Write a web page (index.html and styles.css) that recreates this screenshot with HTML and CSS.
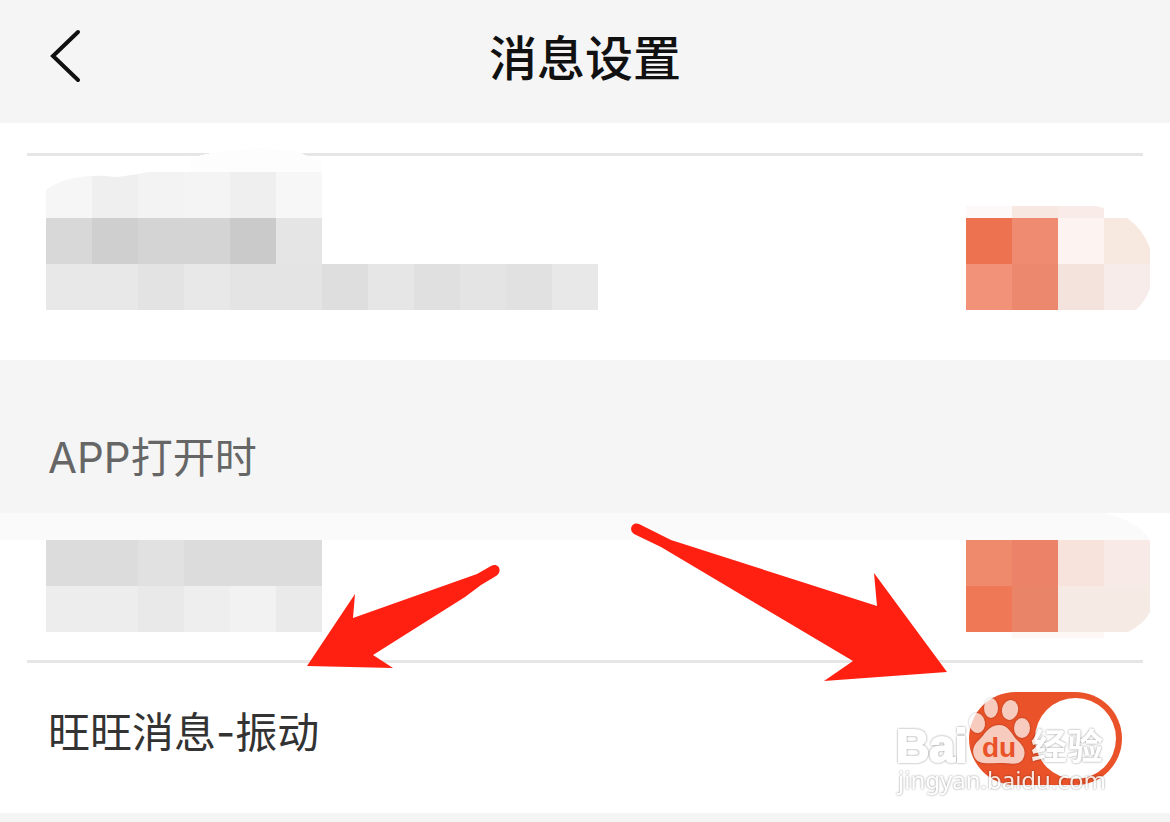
FILE: index.html
```
<!DOCTYPE html>
<html lang="zh-CN">
<head>
    <meta charset="UTF-8">
    <meta name="viewport" content="width=device-width, initial-scale=1.0">
    <title>消息设置</title>
    <link rel="stylesheet" href="styles.css">
</head>
<body>

    <header class="top-bar">
        <button type="button" class="back-button" aria-label="返回">
            <svg width="34" height="56" viewBox="0 0 34 56" fill="none" stroke="#111" stroke-width="4" stroke-linecap="round">
                <path d="M30 4L5 28L30 52"/>
            </svg>
        </button>
        <h1 class="page-title">消息设置</h1>
    </header>

    <main>
        <section class="group">
            <hr class="divider">
            <div class="row row-summary">
                <!-- Texto oculto -->
                <svg class="mosaic" width="552" height="138" viewBox="0 0 552 138" shape-rendering="crispEdges" aria-hidden="true">
                    <path fill="#fdfdfd" d="M144 0V-14C180 -25 242 -28 262 -16L276 -10V0Z"/>
                    <path fill="#f6f6f6" shape-rendering="auto" d="M0 46V18C12 9 26 5 46 4V46Z"/>
                    <path fill="#efefef" shape-rendering="auto" d="M46 46V4C58 3 66 5 72 5L92 2V46Z"/>
                    <path fill="#f3f3f3" shape-rendering="auto" d="M92 46V2L102 0H138V46Z"/>
                    <rect x="138" width="46" height="46" fill="#f4f4f4"/>
                    <rect x="184" width="46" height="46" fill="#efefef"/>
                    <rect x="230" width="46" height="46" fill="#f7f7f7"/>
                    <rect y="46" width="46" height="46" fill="#d8d8d8"/>
                    <rect x="46" y="46" width="46" height="46" fill="#cfcfcf"/>
                    <rect x="92" y="46" width="92" height="46" fill="#d4d4d4"/>
                    <rect x="184" y="46" width="46" height="46" fill="#cacaca"/>
                    <rect x="230" y="46" width="46" height="46" fill="#e5e5e5"/>
                    <rect y="92" width="92" height="46" fill="#e8e8e8"/>
                    <rect x="92" y="92" width="46" height="46" fill="#e3e3e3"/>
                    <rect x="138" y="92" width="46" height="46" fill="#e8e8e8"/>
                    <rect x="184" y="92" width="92" height="46" fill="#e4e4e4"/>
                    <rect x="276" y="92" width="46" height="46" fill="#dedede"/>
                    <rect x="322" y="92" width="46" height="46" fill="#e6e6e6"/>
                    <rect x="368" y="92" width="46" height="46" fill="#e0e0e0"/>
                    <rect x="414" y="92" width="46" height="46" fill="#e4e4e4"/>
                    <rect x="460" y="92" width="46" height="46" fill="#e1e1e1"/>
                    <rect x="506" y="92" width="46" height="46" fill="#e8e8e8"/>
                </svg>
                <svg class="mosaic" width="184" height="104" viewBox="0 0 184 104" aria-hidden="true">
                    <rect width="46" height="12" fill="#fdf9f8"/>
                    <rect x="46" width="46" height="12" fill="#f8e8e2"/>
                    <path fill="#f8ebe8" d="M92 0H130L138 2V12H92Z"/>
                    <rect y="12" width="46" height="46" fill="#ed7350"/>
                    <rect x="46" y="12" width="46" height="46" fill="#ef8b71"/>
                    <rect x="92" y="12" width="46" height="46" fill="#fdf3f0"/>
                    <path fill="#f7e8e0" d="M138 12H161Q176 22 184 42V58H138Z"/>
                    <rect y="58" width="46" height="46" fill="#f19279"/>
                    <rect x="46" y="58" width="46" height="46" fill="#eb886d"/>
                    <rect x="92" y="58" width="46" height="46" fill="#f4e3dd"/>
                    <path fill="#f8ecea" d="M138 58H184V82Q180 95 170 104H138Z"/>
                </svg>
            </div>
        </section>

        <h2 class="group-title">APP打开时</h2>

        <section class="group group-open">
            <div class="row row-sound">
                <svg class="mosaic" width="276" height="92" viewBox="0 0 276 92" shape-rendering="crispEdges" aria-hidden="true">
                    <rect width="92" height="46" fill="#dcdcdc"/>
                    <rect x="92" width="46" height="46" fill="#e1e1e1"/>
                    <rect x="138" width="138" height="46" fill="#dcdcdc"/>
                    <rect y="46" width="92" height="46" fill="#ededed"/>
                    <rect x="92" y="46" width="46" height="46" fill="#e9e9e9"/>
                    <rect x="138" y="46" width="46" height="46" fill="#eeeeee"/>
                    <rect x="184" y="46" width="46" height="46" fill="#f2f2f2"/>
                    <rect x="230" y="46" width="46" height="46" fill="#eaeaea"/>
                </svg>
                <svg class="mosaic" width="184" height="92" viewBox="0 0 184 92" aria-hidden="true">
                    <path fill="#fff" d="M138 -27C158 -22 176 -14 184 0H204V-27Z"/>
                    <rect width="46" height="46" fill="#ef8a6c"/>
                    <rect x="46" width="46" height="46" fill="#ec8268"/>
                    <rect x="92" width="46" height="46" fill="#f8e3dc"/>
                    <rect x="138" width="46" height="46" fill="#f8eae6"/>
                    <rect y="46" width="46" height="46" fill="#ef7857"/>
                    <rect x="46" y="46" width="46" height="46" fill="#e98469"/>
                    <path fill="#f6eae5" d="M92 46H184V72Q178 84 162 92H92Z"/>
                    <rect x="46" y="92" width="92" height="6" fill="#fdf8f6"/>
                </svg>
            </div>
            <hr class="divider">
            <div class="row row-vibrate">
                <label class="row-label" for="vibrate">旺旺消息-振动</label>
                <input type="checkbox" class="switch" id="vibrate" role="switch" checked>

                <svg class="watermark" width="216" height="110" viewBox="0 0 216 110" role="img" aria-label="Baidu 经验">
                    <g class="watermark-text">
                        <text class="watermark-name" x="1" y="68">Bai</text>
                        <text class="watermark-cn" x="136" y="66">经验</text>
                        <text class="watermark-url" x="3" y="95">jingyan.baidu.com</text>
                    </g>
                    <g class="watermark-paw">
                        <ellipse cx="82" cy="29" rx="8" ry="10" transform="rotate(-8 82 29)"/>
                        <ellipse cx="96" cy="14" rx="7" ry="10"/>
                        <ellipse cx="115" cy="16" rx="8" ry="10" transform="rotate(12 115 16)"/>
                        <ellipse cx="127" cy="34" rx="8" ry="10"/>
                        <path d="M104 31C94 31 90 40 84 46C77 52 77 59 80 64C84 71 93 69 104 69C116 69 124 72 128 65C132 57 128 51 121 45C116 39 113 31 104 31Z"/>
                    </g>
                    <text class="watermark-du" x="87" y="63">du</text>
                </svg>
            </div>

            <svg class="arrow arrow-left" width="200" height="110" viewBox="0 0 200 110" aria-hidden="true">
                <path fill="#ff2012" d="M6 106L54 34L52 58L176 14L190 6C198 2 202 12 195 16L180 25L164 37L72 95L92 108Z"/>
            </svg>
            <svg class="arrow arrow-right" width="320" height="162" viewBox="0 0 320 162" aria-hidden="true">
                <path fill="#ff2012" d="M316 152L243 53L246 86L40 20L8 4C1 1 -3 10 3 14L30 27L222 141L193 161Z"/>
            </svg>
        </section>
    </main>

</body>
</html>
```
FILE: styles.css
```
* {
    box-sizing: border-box;
}

body {
    margin: 0;
    min-height: 100vh;
    background: #f5f5f5;
    color: #333;
    font-family: Inter, "Noto Sans CJK SC", sans-serif;
}

.top-bar {
    display: grid;
    grid-template-columns: 1fr auto 1fr;
    align-items: center;
    padding: 23px 48px 28px;
}

.back-button {
    width: 34px;
    height: 56px;
    padding: 0;
    border: 0;
    background: none;
    cursor: pointer;
}

.back-button svg {
    display: block;
}

.page-title {
    margin: 0;
    color: #111;
    font-size: 48px;
    line-height: 72px;
    font-weight: 500;
}

.top-bar .back-button {
    margin-bottom: 6px;
}

.group {
    position: relative;
    padding-top: 30px;
    background: #fff;
}

.group-open {
    padding-top: 0;
}

.divider {
    height: 3px;
    margin: 0 27px;
    border: 0;
    background: #e6e6e6;
}

.row {
    display: flex;
    justify-content: space-between;
    padding: 0 48px;
}

.row-summary {
    align-items: flex-end;
    padding: 16px 20px 50px 46px;
}

.row-sound {
    padding: 27px 20px 28px 46px;
    background: linear-gradient(#fafafa 27px, #fff 27px);
}

.row-vibrate {
    position: relative;
    align-items: flex-start;
    padding-top: 29px;
    padding-bottom: 28px;
}

.mosaic {
    display: block;
    overflow: visible;
}

.group-title {
    margin: 0;
    padding: 68px 48px 25px;
    color: #666;
    font-size: 42px;
    line-height: 60px;
    font-weight: 400;
}

.row-label {
    font-size: 42px;
    line-height: 82px;
}

/* Interruptor */
.switch {
    display: flex;
    align-items: center;
    justify-content: flex-end;
    width: 153px;
    height: 93px;
    margin: 0;
    padding: 6px;
    border-radius: 47px;
    background: #ccc;
    appearance: none;
    cursor: pointer;
}

.switch::before {
    content: "";
    width: 81px;
    height: 81px;
    margin-right: auto;
    border-radius: 50%;
    background: #fff;
}

.switch:checked {
    background: #ea5229;
}

.switch:checked::before {
    margin-right: 0;
}

/* Marca de agua */
.watermark {
    position: absolute;
    top: 31px;
    right: 59px;
    pointer-events: none;
}

.watermark-text {
    fill: #fff;
    opacity: 0.85;
    filter: drop-shadow(0 0 1px rgba(0, 0, 0, 0.5));
}

.watermark-paw {
    fill: #fff;
    opacity: 0.7;
    filter: drop-shadow(0 0 1px rgba(0, 0, 0, 0.4));
}

.watermark-name {
    stroke: #fff;
    stroke-width: 2px;
    font: bold 46px "Liberation Sans", sans-serif;
}

.watermark-cn {
    font: bold 36px "Noto Sans CJK SC", sans-serif;
}

.watermark-url {
    font: 24px "Noto Sans", sans-serif;
}

.watermark-du {
    fill: #ea5229;
    font: bold 28px "Liberation Sans", sans-serif;
}

/* Flechas */
.arrow {
    position: absolute;
    pointer-events: none;
}

.arrow-left {
    top: 47px;
    left: 301px;
}

.arrow-right {
    top: 7px;
    right: 219px;
}
```
